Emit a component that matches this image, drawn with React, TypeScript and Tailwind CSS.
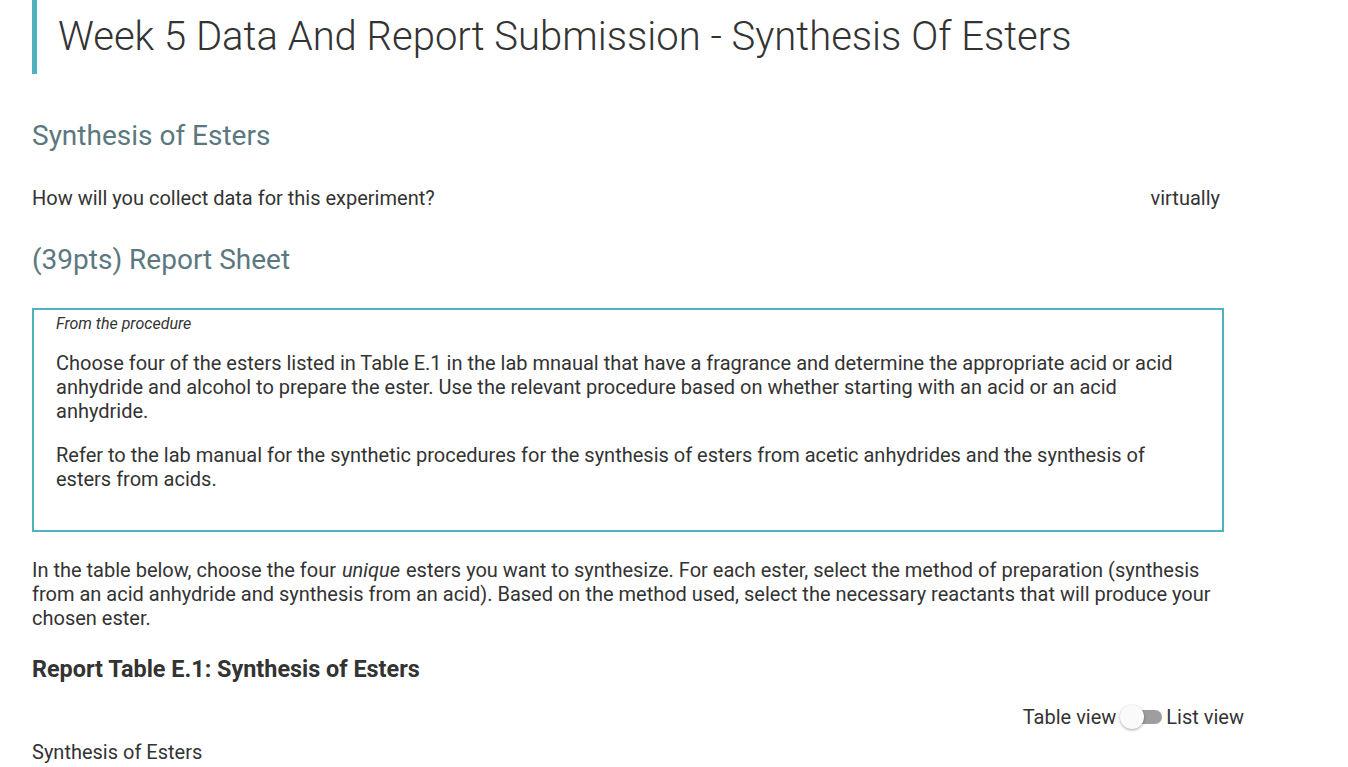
export default function App() {
  return (
    <div
      className="min-h-screen bg-white text-[#333333]"
      style={{ fontFamily: 'Roboto, "Liberation Sans", sans-serif' }}
    >
      <div className="ml-[32px] w-[1192px]">
        {/* page title */}
        <div className="flex h-[74px] items-center border-l-[5px] border-[#4fb3bf] pl-[21px]">
          <h1 className="text-[40px] font-light leading-none text-[#333333]">
            Week 5 Data And Report Submission - Synthesis Of Esters
          </h1>
        </div>

        <h2 className="mt-[45px] text-[28px] leading-[33px] text-[#5b7880]">
          Synthesis of Esters
        </h2>

        <div className="mt-[34px] flex items-center justify-between pr-[4px] text-[20px] leading-[24px]">
          <span>How will you collect data for this experiment?</span>
          <span>virtually</span>
        </div>

        <h2 className="mt-[33px] text-[28px] leading-[33px] text-[#5b7880]">
          (39pts) Report Sheet
        </h2>

        <div className="mt-[32px] border-2 border-[#4fb3bf] pb-[39px] pl-[22px] pr-[22px] pt-[4px]">
          <p className="text-[16px] italic leading-[20px]">From the procedure</p>
          <p className="mt-[17px] text-[20px] leading-[24px]">
            Choose four of the esters listed in Table E.1 in the lab mnaual that have a fragrance and determine the
            appropriate acid or acid anhydride and alcohol to prepare the ester. Use the relevant procedure based on
            whether starting with an acid or an acid anhydride.
          </p>
          <p className="mt-[20px] text-[20px] leading-[24px]">
            Refer to the lab manual for the synthetic procedures for the synthesis of esters from acetic anhydrides and
            the synthesis of esters from acids.
          </p>
        </div>

        <p className="mt-[26px] text-[20px] leading-[24px]">
          In the table below, choose the four <em className="mx-[1px]">unique</em> esters you want to synthesize. For
          each ester, select the method of preparation (synthesis from an acid anhydride and synthesis from an acid).
          Based on the method used, select the necessary reactants that will produce your chosen ester.
        </p>

        <h3 className="mt-[25px] text-[23.4px] font-bold leading-[28px]">Report Table E.1: Synthesis of Esters</h3>

        <div className="mt-[22px] -mr-[20px] flex h-[24px] items-center justify-end text-[20px]">
          <span>Table view</span>
          <div className="relative mx-[4px] h-[24px] w-[42px]">
            <div className="absolute left-[8px] top-[5px] h-[14px] w-[34px] rounded-full bg-[#9e9e9e]" />
            <div className="absolute left-0 top-0 h-[24px] w-[24px] rounded-full bg-[#fafafa] shadow-[0_1px_3px_rgba(0,0,0,0.35)]" />
          </div>
          <span>List view</span>
        </div>

        <p className="mt-[11px] text-[20px] leading-[24px]">Synthesis of Esters</p>
      </div>
    </div>
  );
}
